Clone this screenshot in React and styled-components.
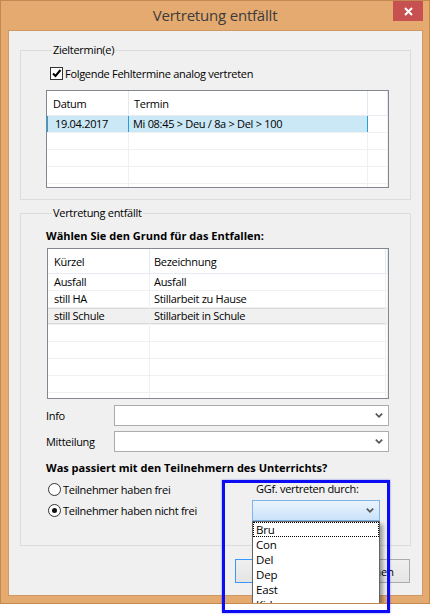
import React from 'react';
import styled, { createGlobalStyle } from 'styled-components';

const GlobalStyle = createGlobalStyle`
  * { box-sizing: border-box; }
  html, body { margin: 0; padding: 0; background: #ffffff; }
  body {
    font-family: "Open Sans", "Noto Sans", sans-serif;
    font-size: 11px;
    letter-spacing: -0.3px;
    color: #000;
  }
`;

const Page = styled.div`
  position: relative;
  width: 431px;
  height: 615px;
  overflow: hidden;
`;

const Window = styled.div`
  width: 430px;
  height: 604px;
  display: flex;
  flex-direction: column;
  background: #e4aa70;
  border: 1px solid #c2884f;
  overflow: hidden;
`;

const TitleBar = styled.div`
  display: grid;
  grid-template-columns: 1fr auto 1fr;
  height: 29px;
`;

const Title = styled.div`
  grid-column: 2;
  line-height: 29px;
  font-size: 15px;
  letter-spacing: -0.2px;
  color: #3c3c3c;
`;

const CloseButton = styled.div`
  grid-column: 3;
  justify-self: end;
  width: 30px;
  height: 20px;
  margin-right: 6px;
  background: #c75050;
  display: flex;
  align-items: center;
  justify-content: center;
`;

const Client = styled.div`
  flex: 1;
  margin: 0 6px 7px 7px;
  padding: 12px 11px 0;
  background: #f0f0f0;
  border: 1px solid #cf9963;
  display: flex;
  flex-direction: column;
`;

const GroupBox = styled.fieldset`
  margin: ${p => p.$top}px 0 0;
  padding: ${p => p.$pad};
  border: 1px solid #dcdcdc;
  min-width: 0;
`;

const Legend = styled.legend`
  margin-left: 6px;
  padding: 0 1px;
  line-height: 14px;
`;

const CheckRow = styled.div`
  display: flex;
  align-items: center;
  gap: 2px;
  height: 14px;
  margin-left: 4px;
`;

const CheckBox = styled.span`
  width: 13px;
  height: 13px;
  border: 1px solid #333;
  background: #fff;
  display: flex;
  align-items: center;
  justify-content: center;
`;

const ListView = styled.div`
  margin: ${p => p.$margin};
  width: ${p => p.$width}px;
  height: ${p => p.$height}px;
  border: 1px solid #828790;
  background: #fff;
  overflow: hidden;
`;

const ListRow = styled.div`
  display: grid;
  grid-template-columns: ${p => p.$cols};
  height: ${p => (p.$header ? 25 : 17)}px;
  border-bottom: 1px solid ${p => (p.$header ? '#e8ecf2' : '#f0f0f0')};
  background: ${p => (p.$inactive ? '#f0f0f0' : 'transparent')};
  box-shadow: ${p => (p.$inactive ? 'inset 0 1px 0 #dadada, inset 0 -1px 0 #dadada' : 'none')};
`;

const ListCell = styled.div`
  padding-left: ${p => p.$pad}px;
  padding-top: ${p => (p.$header ? 1 : 0)}px;
  line-height: ${p => (p.$header ? 23 : 16)}px;
  white-space: nowrap;
  overflow: hidden;
  border-right: 1px solid ${p => (p.$selected ? '#26a0da' : p.$header ? '#e3e8f0' : '#f0f0f0')};
  background: ${p => (p.$selected ? '#cbe8f6' : 'transparent')};
  box-shadow: ${p => (p.$first && p.$selected ? 'inset 1px 0 0 #26a0da' : 'none')};
`;

const Heading = styled.div`
  font-weight: 700;
  line-height: 14px;
  letter-spacing: 0;
  margin-top: ${p => p.$gap || 0}px;
`;

const FieldGrid = styled.div`
  display: grid;
  grid-template-columns: 68px 275px;
  row-gap: 5px;
  align-items: center;
  margin-top: 6px;
`;

const Combo = styled.div`
  position: relative;
  height: 21px;
  border: 1px solid ${p => (p.$active ? '#7eb4ea' : '#acacac')};
  background: ${p => (p.$active ? 'linear-gradient(#ebf4fd, #cae2fa)' : '#fff')};
  display: flex;
  align-items: center;
  justify-content: flex-end;
  padding-right: 5px;
`;

const Popup = styled.ul`
  position: absolute;
  top: calc(100% + 1px);
  left: -1px;
  right: -1px;
  height: 95px;
  margin: 0;
  padding: 0;
  list-style: none;
  background: #fff;
  border: 1px solid #646464;
  box-shadow: 3px 3px 4px rgba(0, 0, 0, 0.35);
`;

const Option = styled.li`
  height: 15px;
  line-height: 13px;
  padding-left: 2px;
  font-size: 11.5px;
  letter-spacing: -0.2px;
  border: 1px ${p => (p.$focus ? 'dotted #000' : 'solid transparent')};
`;

const Choices = styled.div`
  display: grid;
  grid-template-columns: 206px 128px;
  margin-top: 7px;
`;

const RadioColumn = styled.div`
  display: flex;
  flex-direction: column;
  gap: 7px;
  padding-left: 2px;
`;

const RadioRow = styled.div`
  display: flex;
  align-items: center;
  gap: 2px;
  height: 14px;
`;

const Radio = styled.span`
  width: 13px;
  height: 13px;
  border-radius: 50%;
  border: 1px solid #333;
  background: #fff;
  display: flex;
  align-items: center;
  justify-content: center;

  &::after {
    content: '';
    width: 5px;
    height: 5px;
    border-radius: 50%;
    background: #111;
    display: ${p => (p.$checked ? 'block' : 'none')};
  }
`;

const SubstituteColumn = styled.div`
  display: flex;
  flex-direction: column;
  gap: 4px;
`;

const SubLabel = styled.div`
  line-height: 14px;
  padding-left: 4px;
`;

const ButtonRow = styled.div`
  display: flex;
  justify-content: flex-end;
  gap: 7px;
  margin-top: 13px;
  padding-right: 1px;
`;

const Button = styled.button`
  width: ${p => p.$width}px;
  height: 24px;
  padding: 0;
  font: inherit;
  color: #000;
  border: 1px solid ${p => (p.$default ? '#3399ff' : '#acacac')};
  background: linear-gradient(#f0f0f0, #e5e5e5);
`;

const Annotation = styled.div`
  position: absolute;
  left: 222px;
  top: 480px;
  width: 168px;
  height: 133px;
  border: 3px solid #0c0cf2;
  box-shadow: 0 0 2px rgba(0, 0, 220, 0.45);
  pointer-events: none;
`;

const Chevron = () => (
  <svg width="8" height="5" viewBox="0 0 8 5">
    <path d="M0.8 0.6 L4 3.8 L7.2 0.6" fill="none" stroke="#555" strokeWidth="1.7" />
  </svg>
);

const termine = [
  [ '19.04.2017', 'Mi 08:45 > Deu / 8a > Del > 100' ],
  [ '', '' ], [ '', '' ], [ '', '' ], [ '', '' ]
];

const gruende = [
  [ 'Ausfall', 'Ausfall' ],
  [ 'still HA', 'Stillarbeit zu Hause' ],
  [ 'still Schule', 'Stillarbeit in Schule' ],
  [ '', '' ], [ '', '' ], [ '', '' ], [ '', '' ], [ '', '' ]
];

const lehrer = [ 'Bru', 'Con', 'Del', 'Dep', 'East', 'Kid', 'Lam' ];

function App ()
{
    const cols1 = '82px 239px 1fr';
    const cols2 = '102px 236px 1fr';

    return (
        <Page>
            <GlobalStyle />
            <Window>
                <TitleBar>
                    <Title>Vertretung entfällt</Title>
                    <CloseButton>
                        <svg width="9" height="9" viewBox="0 0 9 9">
                            <path d="M1 1 L8 8 M8 1 L1 8" stroke="#fff" strokeWidth="2" />
                        </svg>
                    </CloseButton>
                </TitleBar>

                <Client>
                    <GroupBox $top={ 0 } $pad="9px 0 11px 25px">
                        <Legend>Zieltermin(e)</Legend>
                        <CheckRow>
                            <CheckBox>
                                <svg width="11" height="11" viewBox="0 0 11 11">
                                    <path d="M2 5.5 L4.5 8 L9.5 2" fill="none" stroke="#000" strokeWidth="2" />
                                </svg>
                            </CheckBox>
                            Folgende Fehltermine analog vertreten
                        </CheckRow>

                        <ListView $margin="10px 0 0" $width={ 343 } $height={ 98 }>
                            <ListRow $header $cols={ cols1 }>
                                <ListCell $header $pad={ 6 }>Datum</ListCell>
                                <ListCell $header $pad={ 5 }>Termin</ListCell>
                                <ListCell $header />
                            </ListRow>
                            {
                                termine.map( ( row, i ) => (
                                    <ListRow key={ i } $cols={ cols1 }>
                                        <ListCell $first $selected={ i === 0 } $pad={ 8 }>{ row[ 0 ] }</ListCell>
                                        <ListCell $selected={ i === 0 } $pad={ 4 }>{ row[ 1 ] }</ListCell>
                                        <ListCell />
                                    </ListRow>
                                ) )
                            }
                        </ListView>
                    </GroupBox>

                    <GroupBox $top={ 6 } $pad="9px 0 24px 25px">
                        <Legend>Vertretung entfällt</Legend>
                        <Heading>Wählen Sie den Grund für das Entfallen:</Heading>

                        <ListView $margin="5px 0 0 1px" $width={ 342 } $height={ 151 }>
                            <ListRow $header $cols={ cols2 }>
                                <ListCell $header $pad={ 6 }>Kürzel</ListCell>
                                <ListCell $header $pad={ 4 }>Bezeichnung</ListCell>
                                <ListCell $header />
                            </ListRow>
                            {
                                gruende.map( ( row, i ) => (
                                    <ListRow key={ i } $cols={ cols2 } $inactive={ i === 2 }>
                                        <ListCell $pad={ 6 }>{ row[ 0 ] }</ListCell>
                                        <ListCell $pad={ 4 }>{ row[ 1 ] }</ListCell>
                                        <ListCell />
                                    </ListRow>
                                ) )
                            }
                        </ListView>

                        <FieldGrid>
                            <span>Info</span>
                            <Combo><Chevron /></Combo>
                            <span>Mitteilung</span>
                            <Combo><Chevron /></Combo>
                        </FieldGrid>

                        <Heading $gap={ 9 }>Was passiert mit den Teilnehmern des Unterrichts?</Heading>

                        <Choices>
                            <RadioColumn>
                                <RadioRow><Radio />Teilnehmer haben frei</RadioRow>
                                <RadioRow><Radio $checked />Teilnehmer haben nicht frei</RadioRow>
                            </RadioColumn>
                            <SubstituteColumn>
                                <SubLabel>GGf. vertreten durch:</SubLabel>
                                <Combo $active>
                                    <Chevron />
                                    <Popup>
                                        {
                                            lehrer.map( ( name, i ) => (
                                                <Option key={ name } $focus={ i === 0 }>{ name }</Option>
                                            ) )
                                        }
                                    </Popup>
                                </Combo>
                            </SubstituteColumn>
                        </Choices>
                    </GroupBox>

                    <ButtonRow>
                        <Button $default $width={ 80 }>OK</Button>
                        <Button $width={ 88 }>Abbrechen</Button>
                    </ButtonRow>
                </Client>
            </Window>
            <Annotation />
        </Page>
    );
}

export default App;
